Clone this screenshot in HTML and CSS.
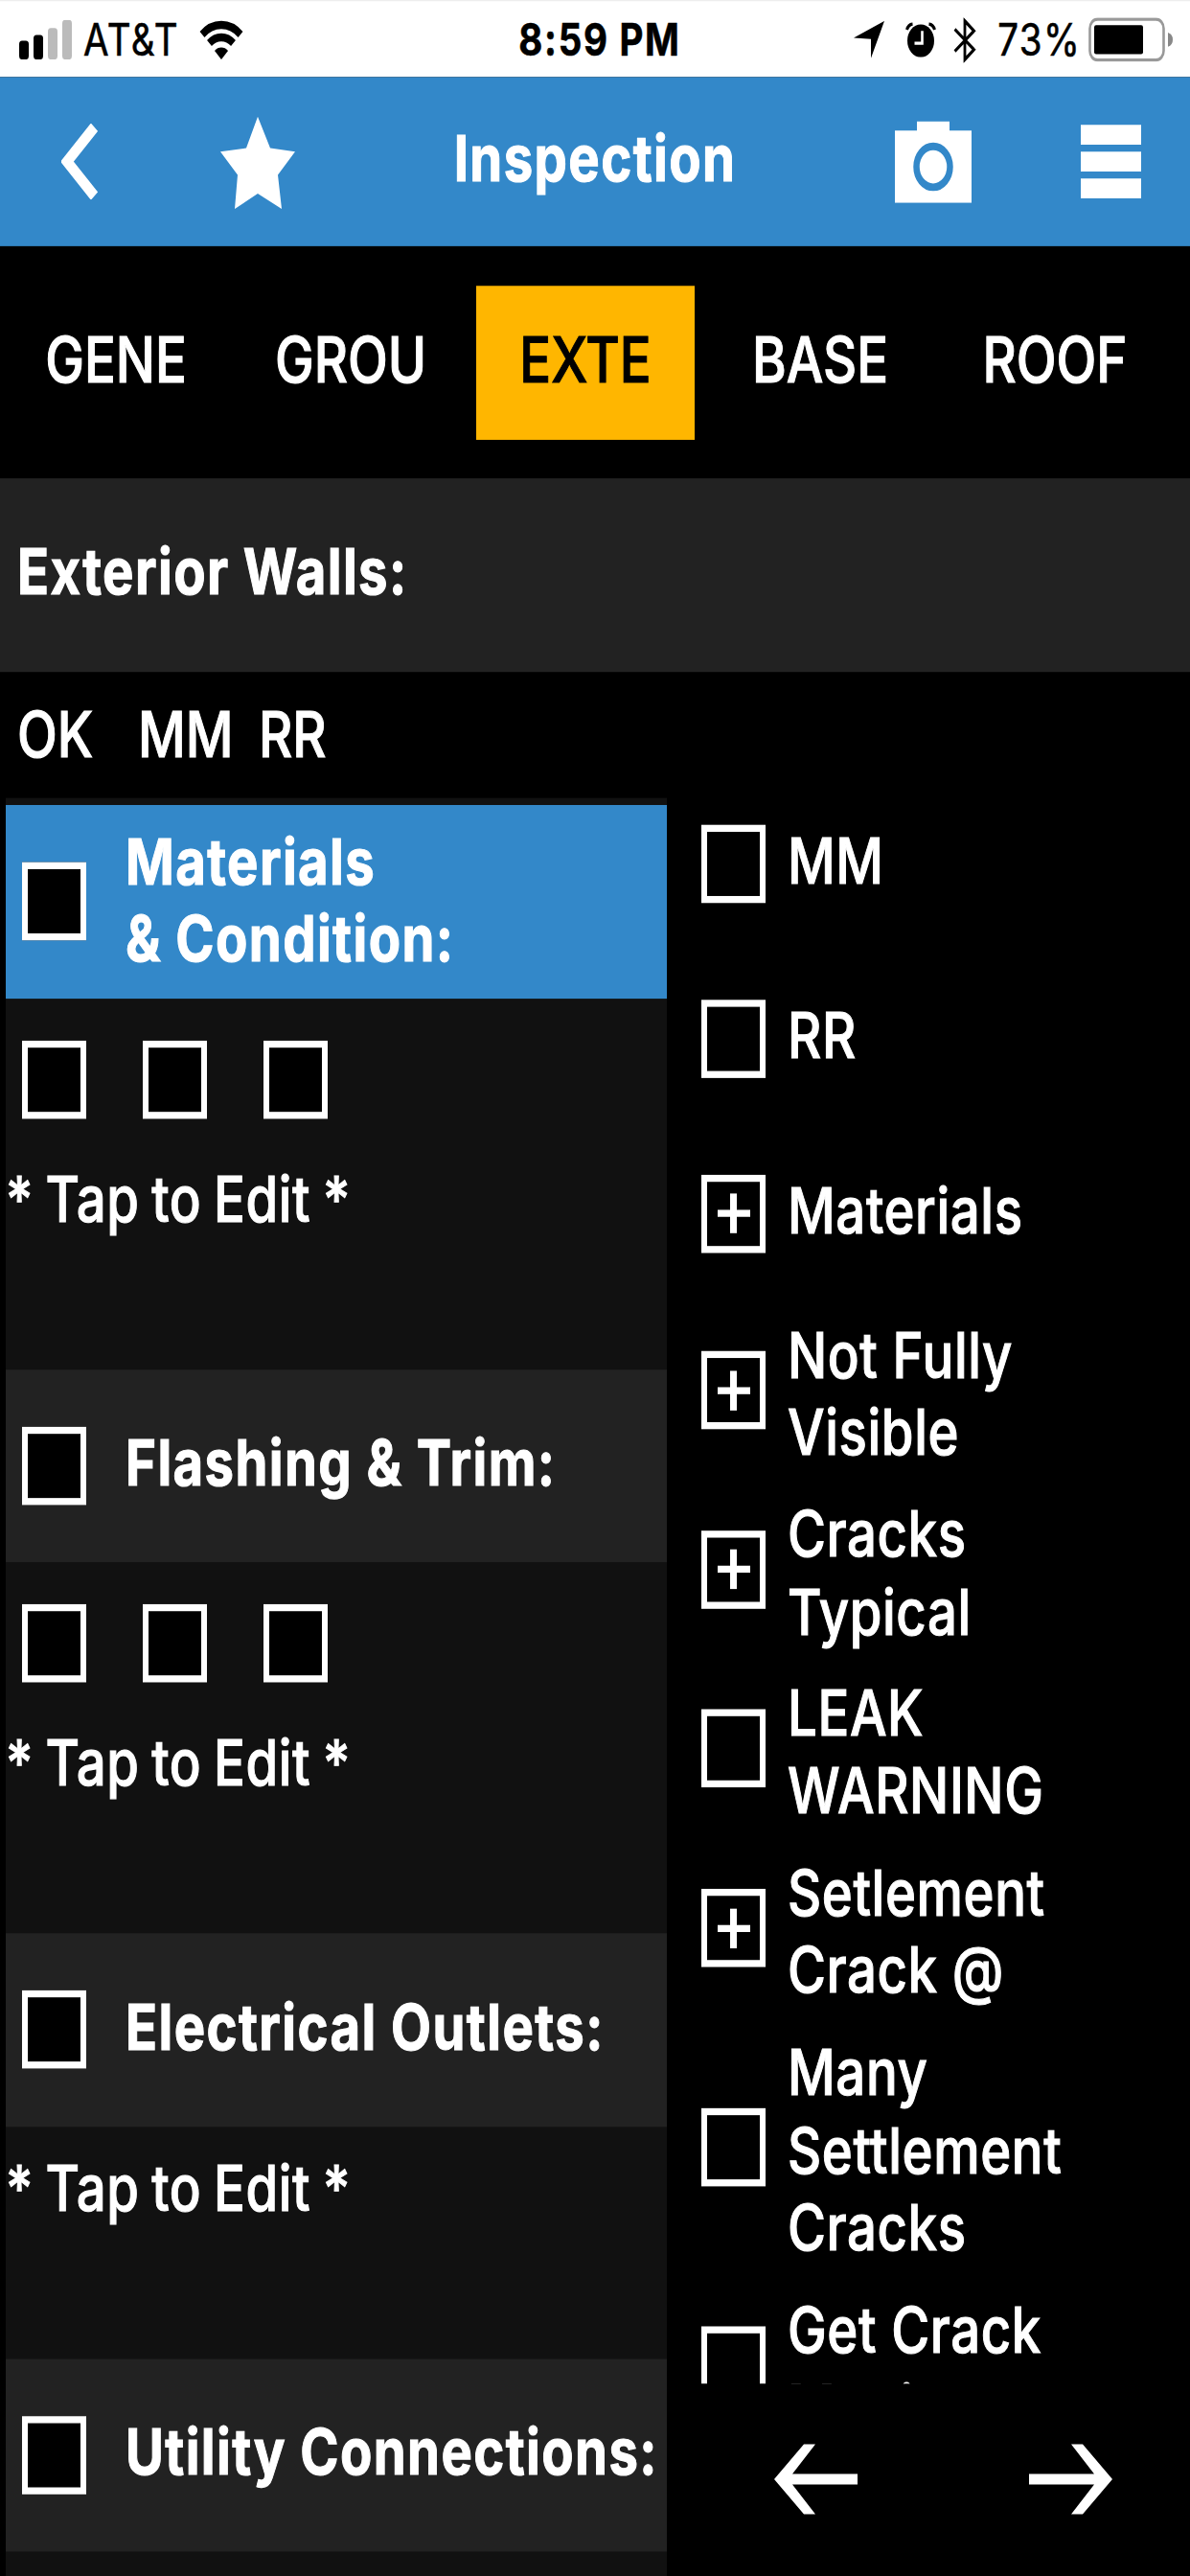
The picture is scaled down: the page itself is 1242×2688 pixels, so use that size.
FILE: index.html
```
<!DOCTYPE html>
<html lang="en">
<head>
    <meta charset="UTF-8">
    <meta name="viewport" content="width=device-width, initial-scale=1.0">
    <title>Inspection</title>
    <link rel="stylesheet" href="styles.css">
</head>
<body>
    <div class="app">
        <div class="status-bar">
            <div class="status-left">
                <svg class="signal" width="55" height="34" viewBox="0 0 55 34">
                    <rect x="0" y="18" width="10" height="16" rx="3" fill="#000"/>
                    <rect x="15" y="13" width="10" height="21" rx="3" fill="#000"/>
                    <rect x="30" y="7" width="10" height="27" rx="3" fill="#bbb"/>
                    <rect x="45" y="0" width="10" height="34" rx="3" fill="#bbb"/>
                </svg>
                <span class="carrier">AT&amp;T</span>
                <svg class="wifi" width="46" height="34" viewBox="0 0 46 34">
                    <path d="M3 12.5a28.5 28.5 0 0 1 40 0" fill="none" stroke="#000" stroke-width="7"/>
                    <path d="M10.500 20a18 18 0 0 1 25 0" fill="none" stroke="#000" stroke-width="7"/>
                    <path d="M16 26.500a10 10 0 0 1 14 0L23 34z" fill="#000"/>
                </svg>
            </div>
            <div class="time">8:59 PM</div>
            <div class="status-right">
                <svg width="32" height="32" viewBox="0 0 32 32"><path d="M32 0L18 32V15.500L0 14.500z" fill="#000"/></svg>
                <svg class="alarm" width="32" height="30" viewBox="0 0 32 30">
                    <circle cx="16" cy="16" r="14" fill="#000"/>
                    <path d="M1.500 6.500Q3 2 7.500 1.500M30.500 6.500Q29 2 24.500 1.500" fill="none" stroke="#000" stroke-width="3"/>
                    <path d="M17.500 7.500v10.500h-8" fill="none" stroke="#fff" stroke-width="2.600"/>
                </svg>
                <svg class="bluetooth" width="24" height="39" viewBox="0 0 24 39">
                    <path d="M1.500 10L21.500 27.500L12 36V3L21.500 11.500L1.500 29" fill="none" stroke="#000" stroke-width="2.800"/>
                </svg>
                <span class="percent">73%</span>
                <svg class="battery" width="89" height="38" viewBox="0 0 89 38">
                    <rect x="1.500" y="1.500" width="77" height="35" rx="8" fill="none" stroke="#999" stroke-width="2.600"/>
                    <rect x="6" y="6.500" width="51" height="25" rx="2" fill="#000"/>
                    <path d="M83 13q5 1.500 5 6t-5 6z" fill="#888"/>
                </svg>
            </div>
        </div>

        <div class="nav-bar">
            <svg class="back" width="38" height="65" viewBox="0 0 38 65"><path d="M34.500 3L6 32.500L34.500 62" fill="none" stroke="#fff" stroke-width="10"/></svg>
            <svg class="star" width="78" height="79" viewBox="0 0 78 79"><path d="M39 0L52 27L78 30L60 50L64 79L39 66L15 79L18 50L0 30L27 27z" fill="#fff"/></svg>
            <div class="title">Inspection</div>
            <svg class="camera" width="80" height="70" viewBox="0 0 80 70">
                <path d="M23 0h34v8h23v62H0V8h23z" fill="#fff"/>
                <circle cx="40" cy="39" r="17.500" fill="none" stroke="#3388c9" stroke-width="6.500"/>
            </svg>
            <div class="menu"><i></i><i></i><i></i></div>
        </div>

        <div class="tabs">
            <div class="tab">GENE</div>
            <div class="tab">GROU</div>
            <div class="tab active">EXTE</div>
            <div class="tab">BASE</div>
            <div class="tab">ROOF</div>
        </div>

        <div class="section-title">Exterior Walls:</div>

        <div class="content">
            <div class="left">
                <div class="columns"><span>OK</span><span>MM</span><span>RR</span></div>
                <div class="items">
                    <div class="item-head selected"><div class="box"></div><div class="name two">Materials<br>&amp; Condition:</div></div>
                    <div class="item-body">
                        <div class="checks"><div class="box"></div><div class="box"></div><div class="box"></div></div>
                        <div class="edit">* Tap to Edit *</div>
                    </div>
                    <div class="item-head"><div class="box"></div><div class="name">Flashing &amp; Trim:</div></div>
                    <div class="item-body">
                        <div class="checks"><div class="box"></div><div class="box"></div><div class="box"></div></div>
                        <div class="edit">* Tap to Edit *</div>
                    </div>
                    <div class="item-head"><div class="box"></div><div class="name">Electrical Outlets:</div></div>
                    <div class="item-body short">
                        <div class="edit">* Tap to Edit *</div>
                    </div>
                    <div class="item-head"><div class="box"></div><div class="name">Utility Connections:</div></div>
                </div>
            </div>

            <div class="right">
                <div class="choices">
                    <div class="choice one"><div class="box"></div><div class="label">MM</div></div>
                    <div class="choice one"><div class="box"></div><div class="label">RR</div></div>
                    <div class="choice one"><div class="box plus"></div><div class="label">Materials</div></div>
                    <div class="choice"><div class="box plus"></div><div class="label">Not Fully<br>Visible</div></div>
                    <div class="choice"><div class="box plus"></div><div class="label">Cracks<br>Typical</div></div>
                    <div class="choice"><div class="box"></div><div class="label">LEAK<br>WARNING</div></div>
                    <div class="choice"><div class="box plus"></div><div class="label">Setlement<br>Crack @</div></div>
                    <div class="choice three"><div class="box"></div><div class="label">Many<br>Settlement<br>Cracks</div></div>
                    <div class="choice"><div class="box"></div><div class="label">Get Crack<br>Monitor</div></div>
                </div>
                <div class="pager">
                    <svg width="87" height="62" viewBox="0 0 87 62"><path d="M0 31L31 1H43L19 26.500H87V35.500H19L43 61H31z" fill="#fff"/></svg>
                    <svg width="87" height="62" viewBox="0 0 87 62"><path d="M87 31L56 1H44L68 26.500H0V35.500H68L44 61H56z" fill="#fff"/></svg>
                </div>
            </div>
        </div>
    </div>
</body>
</html>
```

FILE: styles.css
```
* { box-sizing: border-box; }
html { background: #000; }
body { margin: 0; height: 2688px; overflow: hidden; background: #000; color: #fff; font-family: Inter, "Liberation Sans", sans-serif; }
svg { display: block; flex: none; }

/* 1242x2208 layout stretched to the taller screen */
.app { width: 1242px; height: 2208px; display: flex; flex-direction: column; overflow: hidden; transform: scaleY(1.2174); transform-origin: 0 0; font-size: 54.5px; line-height: 66.5px; font-weight: 500; -webkit-text-stroke: 0.9px currentColor; }

.status-bar { height: 66px; flex: none; display: grid; grid-template-columns: 1fr auto 1fr; background: #fff; color: #000; border-top: 1px solid #eee; padding: 0 17px 0 20px; font-size: 38.5px; line-height: 66px; font-weight: 400; -webkit-text-stroke: 0.5px currentColor; }
.status-left, .status-right { display: flex; align-items: center; }
.status-right { justify-content: flex-end; }
.carrier { margin-left: 12px; letter-spacing: 1.4px; }
.wifi { margin-left: 21px; }
.time { padding-left: 7px; font-weight: 700; letter-spacing: 1.7px; }
.alarm { margin-left: 22px; }
.bluetooth { margin-left: 18px; }
.percent { margin-left: 22px; letter-spacing: 1.3px; }
.battery { margin-left: 8px; }

.nav-bar { height: 145px; flex: none; display: flex; align-items: center; background: #3388c9; padding: 0 51px 0 64px; }
.star { margin: 2px 0 0 128px; }
.title { width: 300px; margin: 0 auto; text-align: center; padding-bottom: 7px; font-weight: 700; letter-spacing: 1.4px; white-space: nowrap; }
.camera { margin-right: 114px; }
.menu { width: 63px; display: flex; flex-direction: column; gap: 6px; }
.menu i { height: 17px; background: #fff; }

.tabs { height: 199px; flex: none; display: flex; gap: 17px; padding: 34px 0 0 7px; }
.tab { width: 228px; height: 132px; flex: none; padding-bottom: 6px; display: flex; align-items: center; justify-content: center; }
.active { background: #ffb600; color: #000; }

.section-title { height: 166px; flex: none; background: #222; padding: 46px 0 0 18px; font-weight: 700; letter-spacing: 1.4px; }

.content { flex: 1; display: flex; min-height: 0; }
.left { width: 696px; padding-left: 6px; }
.columns { height: 108px; padding: 20px 0 0 12px; display: flex; }
.columns span { width: 126px; }
.items { height: 1524px; background: #111; padding-top: 6px; overflow: hidden; }
.item-head { height: 165.5px; background: #222; display: flex; align-items: center; padding-left: 17px; }
.selected { background: #3388c9; }
.name { margin-left: 41px; padding-bottom: 6px; font-weight: 700; letter-spacing: 1.4px; white-space: nowrap; }
.two { padding-bottom: 3px; }
.box { width: 67px; height: 67px; flex: none; border: 6.5px solid #fff; background: #000; }
.item-body { height: 318px; padding-top: 36px; }
.short { height: 199px; padding-top: 0; }
.checks { display: flex; gap: 59px; padding-left: 17px; }
.edit { padding-left: 0; margin-top: 35px; letter-spacing: 0.6px; word-spacing: -2.5px; }
.short .edit { padding-top: 19px; margin-top: 0; }

.right { flex: 1; display: flex; flex-direction: column; padding-left: 36px; }
.choices { height: 1467px; padding-top: 89px; overflow: hidden; }
.choice { height: 153.6px; display: flex; align-items: center; }
.one { height: 150px; }
.three { height: 221.8px; }
.label { margin-left: 23px; padding-top: 5px; letter-spacing: 0.6px; white-space: nowrap; }
.one .label { padding: 0 0 6px; }
.plus { display: grid; place-items: center; }
.plus::before, .plus::after { content: ""; grid-area: 1 / 1; background: #fff; }
.plus::before { width: 34px; height: 6px; }
.plus::after { width: 7px; height: 34px; }
.pager { display: flex; gap: 179px; padding: 51px 0 0 76px; }
```
